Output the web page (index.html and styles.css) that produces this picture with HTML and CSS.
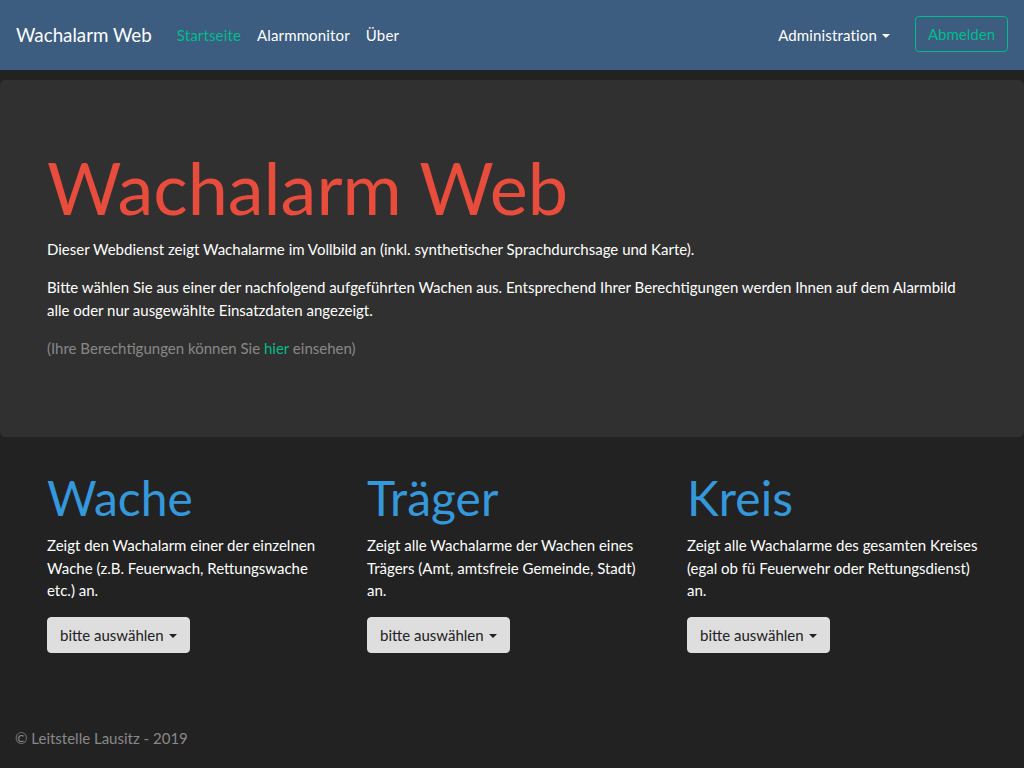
FILE: index.html
```html
<!DOCTYPE html>
<html lang="de">
<head>
<meta charset="utf-8">
<title>Wachalarm Web</title>
<link rel="stylesheet" href="styles.css">
</head>
<body>
<nav class="navbar">
  <a class="brand" href="#">Wachalarm Web</a>
  <ul class="nav">
    <li><a class="nav-link active" href="#">Startseite</a></li>
    <li><a class="nav-link" href="#">Alarmmonitor</a></li>
    <li><a class="nav-link" href="#">Über</a></li>
  </ul>
  <div class="nav-right">
    <a class="nav-link dropdown" href="#">Administration<span class="caret"></span></a>
    <a class="btn-outline" href="#">Abmelden</a>
  </div>
</nav>

<div class="jumbotron">
  <div class="container">
    <h1 class="display">Wachalarm Web</h1>
    <p>Dieser Webdienst zeigt Wachalarme im Vollbild an (inkl. synthetischer Sprachdurchsage und Karte).</p>
    <p>Bitte wählen Sie aus einer der nachfolgend aufgeführten Wachen aus. Entsprechend Ihrer Berechtigungen werden Ihnen auf dem Alarmbild alle oder nur ausgewählte Einsatzdaten angezeigt.</p>
    <p class="muted">(Ihre Berechtigungen können Sie <a href="#">hier</a> einsehen)</p>
  </div>
</div>

<div class="container">
  <div class="row">
    <div class="col">
      <h2>Wache</h2>
      <p>Zeigt den Wachalarm einer der einzelnen Wache (z.B. Feuerwach, Rettungswache etc.) an.</p>
      <button class="btn-light">bitte auswählen<span class="caret"></span></button>
    </div>
    <div class="col">
      <h2>Träger</h2>
      <p>Zeigt alle Wachalarme der Wachen eines Trägers (Amt, amtsfreie Gemeinde, Stadt)<br>an.</p>
      <button class="btn-light">bitte auswählen<span class="caret"></span></button>
    </div>
    <div class="col">
      <h2>Kreis</h2>
      <p>Zeigt alle Wachalarme des gesamten Kreises (egal ob fü Feuerwehr oder Rettungsdienst) an.</p>
      <button class="btn-light">bitte auswählen<span class="caret"></span></button>
    </div>
  </div>
</div>

<footer class="footer">© Leitstelle Lausitz - 2019</footer>
</body>
</html>
```
FILE: styles.css
```css
* { box-sizing: border-box; }
html, body { margin: 0; padding: 0; }
body {
  background: #222222;
  color: #ffffff;
  font-family: Lato, "Noto Sans", sans-serif;
  font-size: 15px;
  line-height: 1.5;
}
a { text-decoration: none; }

.navbar {
  display: flex;
  align-items: center;
  height: 70px;
  padding: 0 16px;
  background: #3c5c80;
  margin-bottom: 10px;
}
.brand {
  color: #fff;
  font-size: 18.75px;
  margin-right: 17px;
  line-height: 1.5;
}
.nav {
  display: flex;
  list-style: none;
  margin: 0;
  padding: 0;
}
.nav-link {
  display: block;
  color: #fff;
  padding: 8px;
  letter-spacing: 0.15px;
}
.nav-link.active { color: #00bc8c; }
.nav-right {
  margin-left: auto;
  display: flex;
  align-items: center;
}
.nav-right .btn-outline { margin-top: -2px; }
.caret {
  display: inline-block;
  margin-left: 5px;
  vertical-align: 3px;
  border-top: 4.5px solid currentColor;
  border-left: 4.5px solid transparent;
  border-right: 4.5px solid transparent;
}
.btn-outline {
  margin-left: 17px;
  color: #00bc8c;
  border: 1px solid #00bc8c;
  border-radius: 4px;
  padding: 6px 12px;
  line-height: 22.5px;
}

.jumbotron {
  background: #303030;
  border-radius: 5px;
  padding: 64px 0 62px;
  margin-bottom: 32px;
}
.container {
  max-width: 960px;
  margin: 0 auto;
  padding: 0 15px;
}
.display {
  font-size: 72px;
  font-weight: 400;
  line-height: 1.2;
  color: #e74c3c;
  margin: 0 0 8px;
}
.jumbotron p { margin: 0 0 15.5px; }
p { margin: 0 0 16px; }
.muted { color: #888888; }
.muted a { color: #00bc8c; }

.row {
  display: grid;
  grid-template-columns: repeat(3, 1fr);
  margin: 0 -15px;
}
.col { padding: 0 13px 0 15px; }
.col h2 {
  font-size: 48px;
  font-weight: 400;
  line-height: 1.2;
  color: #3498db;
  margin: 0 0 8px;
}
.col p { margin-bottom: 15px; }
.btn-light {
  font-family: inherit;
  font-size: 15px;
  line-height: 22px;
  color: #222;
  background: #dedede;
  border: 1px solid #dedede;
  border-radius: 4px;
  padding: 6px 12px;
}
.footer {
  padding: 74px 15px 0;
  color: #888888;
}
```
